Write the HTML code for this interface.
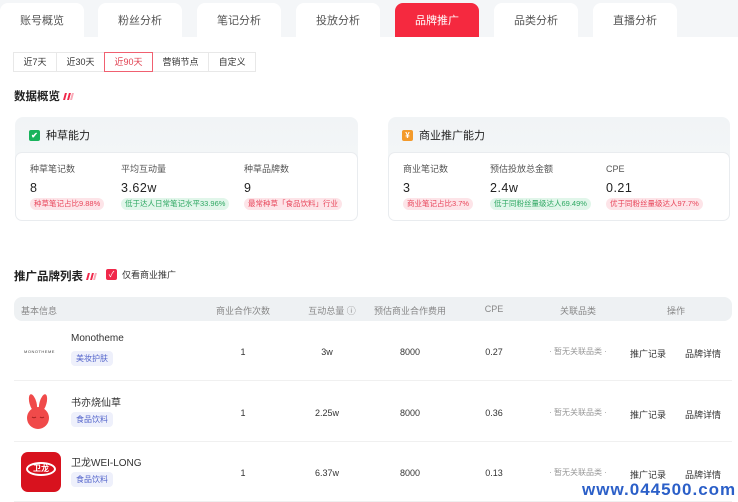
<!DOCTYPE html>
<html><head><meta charset="utf-8"><style>
*{margin:0;padding:0;box-sizing:border-box}
body{width:738px;height:500px;overflow:hidden;background:#fff;font-family:"Liberation Sans","Noto Sans CJK SC",sans-serif;color:#333;position:relative}
.abs{position:absolute}
.topbar{left:0;top:0;width:738px;height:37px;background:#f4f6f8}
.tab{position:absolute;top:3px;height:34px;width:84px;background:#fff;border-radius:8px 8px 0 0;font-size:11px;color:#555;text-align:center;line-height:36px}
.tab.on{background:#f5293f;color:#fff}
.dates{left:14px;top:52px;height:20px;display:flex;font-size:9px}
.dates div{border:1px solid #e8e8e8;padding:0 9.5px;line-height:18px;color:#333;margin-left:-1px}
.dates .on{border-color:#f06070;color:#e04050;position:relative;z-index:1}
.h{font-size:11.5px;font-weight:bold;color:#222}
.bars{display:inline-block;margin-left:4px}
.bars i{display:inline-block;width:2px;height:7px;background:#f0284a;transform:skewX(-15deg);margin-right:1.5px}
.card{border-radius:8px;background:linear-gradient(#f1f4f6,#f7f9fa)}
.inner{position:absolute;left:0;right:0;top:35px;bottom:0;background:#fff;border:1px solid #e9ecef;border-radius:7px}
.ct{position:absolute;left:14px;top:10px;font-size:11px;color:#222;display:flex;align-items:center}
.ic{width:11px;height:11px;border-radius:2px;margin-right:6px;color:#fff;font-size:8px;line-height:11px;text-align:center;font-weight:bold}
.m{position:absolute;top:10px;font-size:9px;color:#555;line-height:12px}
.m b{display:block;font-weight:normal;font-size:12.5px;line-height:16px;color:#222;margin-top:5px;letter-spacing:.5px}
.tag{display:inline-block;font-size:7.5px;padding:0 4px;line-height:12px;border-radius:6px;margin-top:2px;white-space:nowrap}
.r{background:#fde4e8;color:#e8455a}.g{background:#e1f6ea;color:#2fa863}
.th{left:14px;top:297px;width:718px;height:24px;background:#eef1f3;border-radius:8px;font-size:9px;color:#888}
.th span,.row span.c{position:absolute;transform:translateX(-50%);white-space:nowrap}
.row{position:absolute;left:14px;width:718px;height:60px;border-bottom:1px solid #f0f0f0;font-size:9px;color:#333}
.nm{position:absolute;left:57px;top:12px;font-size:10px;color:#333}
.bt{position:absolute;left:57px;top:30px;font-size:8px;color:#5566cc;background:#eef0fb;padding:0 5px;line-height:15px;border-radius:4px}
.no{color:#999;font-size:8px}
</style></head><body>
<div class="abs topbar"></div>
<div class="tab" style="left:0">账号概览</div>
<div class="tab" style="left:98px">粉丝分析</div>
<div class="tab" style="left:197px">笔记分析</div>
<div class="tab" style="left:296px">投放分析</div>
<div class="tab on" style="left:395px">品牌推广</div>
<div class="tab" style="left:494px">品类分析</div>
<div class="tab" style="left:593px">直播分析</div>
<div class="abs dates"><div>近7天</div><div>近30天</div><div class="on">近90天</div><div>营销节点</div><div>自定义</div></div>
<div class="abs h" style="left:14px;top:88px">数据概览<span class="bars"><i></i><i></i><i style="opacity:.4"></i></span></div>

<div class="abs card" style="left:15px;top:117px;width:343px;height:104px">
<div class="ct"><div class="ic" style="background:#19b35c">✔</div>种草能力</div>
<div class="inner">
<div class="m" style="left:14px">种草笔记数<b>8</b><span class="tag r">种草笔记占比9.88%</span></div>
<div class="m" style="left:105px">平均互动量<b>3.62w</b><span class="tag g">低于达人日常笔记水平33.96%</span></div>
<div class="m" style="left:228px">种草品牌数<b>9</b><span class="tag r">最常种草「食品饮料」行业</span></div>
</div></div>

<div class="abs card" style="left:388px;top:117px;width:342px;height:104px">
<div class="ct"><div class="ic" style="background:#f39a2b">¥</div>商业推广能力</div>
<div class="inner">
<div class="m" style="left:14px">商业笔记数<b>3</b><span class="tag r">商业笔记占比3.7%</span></div>
<div class="m" style="left:101px">预估投放总金额<b>2.4w</b><span class="tag g">低于同粉丝量级达人69.49%</span></div>
<div class="m" style="left:217px">CPE<b>0.21</b><span class="tag r">优于同粉丝量级达人97.7%</span></div>
</div></div>

<div class="abs h" style="left:14px;top:268px">推广品牌列表<span class="bars"><i></i><i></i><i style="opacity:.4"></i></span></div>
<div class="abs" style="left:106px;top:268px;font-size:9px;color:#333;display:flex;align-items:center"><div style="width:11px;height:11px;background:#f0284a;border-radius:2px;color:#fff;font-size:8px;line-height:11px;text-align:center;margin-right:5px">✓</div>仅看商业推广</div>

<div class="abs th">
<span style="left:7px;top:7px;transform:none">基本信息</span>
<span style="left:229px;top:7px">商业合作次数</span>
<span style="left:318px;top:7px">互动总量 ⓘ</span>
<span style="left:396px;top:7px">预估商业合作费用</span>
<span style="left:480px;top:7px">CPE</span>
<span style="left:564px;top:7px">关联品类</span>
<span style="left:662px;top:7px">操作</span>
</div>

<div class="row" style="top:321px">
<span class="abs" style="left:10px;top:28px;font-size:4px;letter-spacing:.5px;color:#444">MONOTHEME</span>
<span class="nm">Monotheme</span><span class="bt">美妆护肤</span>
<span class="c" style="left:229px;top:26px">1</span><span class="c" style="left:313px;top:26px">3w</span><span class="c" style="left:396px;top:26px">8000</span><span class="c" style="left:480px;top:26px">0.27</span><span class="c no" style="left:564px;top:25px">· 暂无关联品类 ·</span><span class="c" style="left:634px;top:26px">推广记录</span><span class="c" style="left:689px;top:26px">品牌详情</span>
</div>
<div class="row" style="top:382px">
<svg class="abs" style="left:11px;top:12px" width="26" height="36" viewBox="0 0 26 36"><ellipse cx="8" cy="9" rx="3.5" ry="9" fill="#f04a4a" transform="rotate(-15 8 9)"/><ellipse cx="18" cy="9" rx="3.5" ry="9" fill="#f04a4a" transform="rotate(15 18 9)"/><circle cx="13" cy="24" r="11" fill="#f04a4a"/><path d="M7 23q2 1.5 4 0M15 23q2 1.5 4 0" stroke="#a02020" fill="none" stroke-width="1"/></svg>
<span class="nm">书亦烧仙草</span><span class="bt">食品饮料</span>
<span class="c" style="left:229px;top:26px">1</span><span class="c" style="left:313px;top:26px">2.25w</span><span class="c" style="left:396px;top:26px">8000</span><span class="c" style="left:480px;top:26px">0.36</span><span class="c no" style="left:564px;top:25px">· 暂无关联品类 ·</span><span class="c" style="left:634px;top:26px">推广记录</span><span class="c" style="left:689px;top:26px">品牌详情</span>
</div>
<div class="row" style="top:442px">
<div class="abs" style="left:7px;top:10px;width:40px;height:40px;background:#d8121e;border-radius:7px"><div style="position:absolute;left:5px;top:10px;width:30px;height:14px;border:2px solid #fff;border-radius:50%;color:#fff;font-size:8px;text-align:center;line-height:10px;font-weight:bold">卫龙</div></div>
<span class="nm">卫龙WEI-LONG</span><span class="bt">食品饮料</span>
<span class="c" style="left:229px;top:26px">1</span><span class="c" style="left:313px;top:26px">6.37w</span><span class="c" style="left:396px;top:26px">8000</span><span class="c" style="left:480px;top:26px">0.13</span><span class="c no" style="left:564px;top:25px">· 暂无关联品类 ·</span><span class="c" style="left:634px;top:26px">推广记录</span><span class="c" style="left:689px;top:26px">品牌详情</span>
</div>
<div class="abs" style="left:582px;top:480px;font-size:17px;font-weight:bold;color:#2b5fc8;letter-spacing:1px">www.044500.com</div>
</body></html>
